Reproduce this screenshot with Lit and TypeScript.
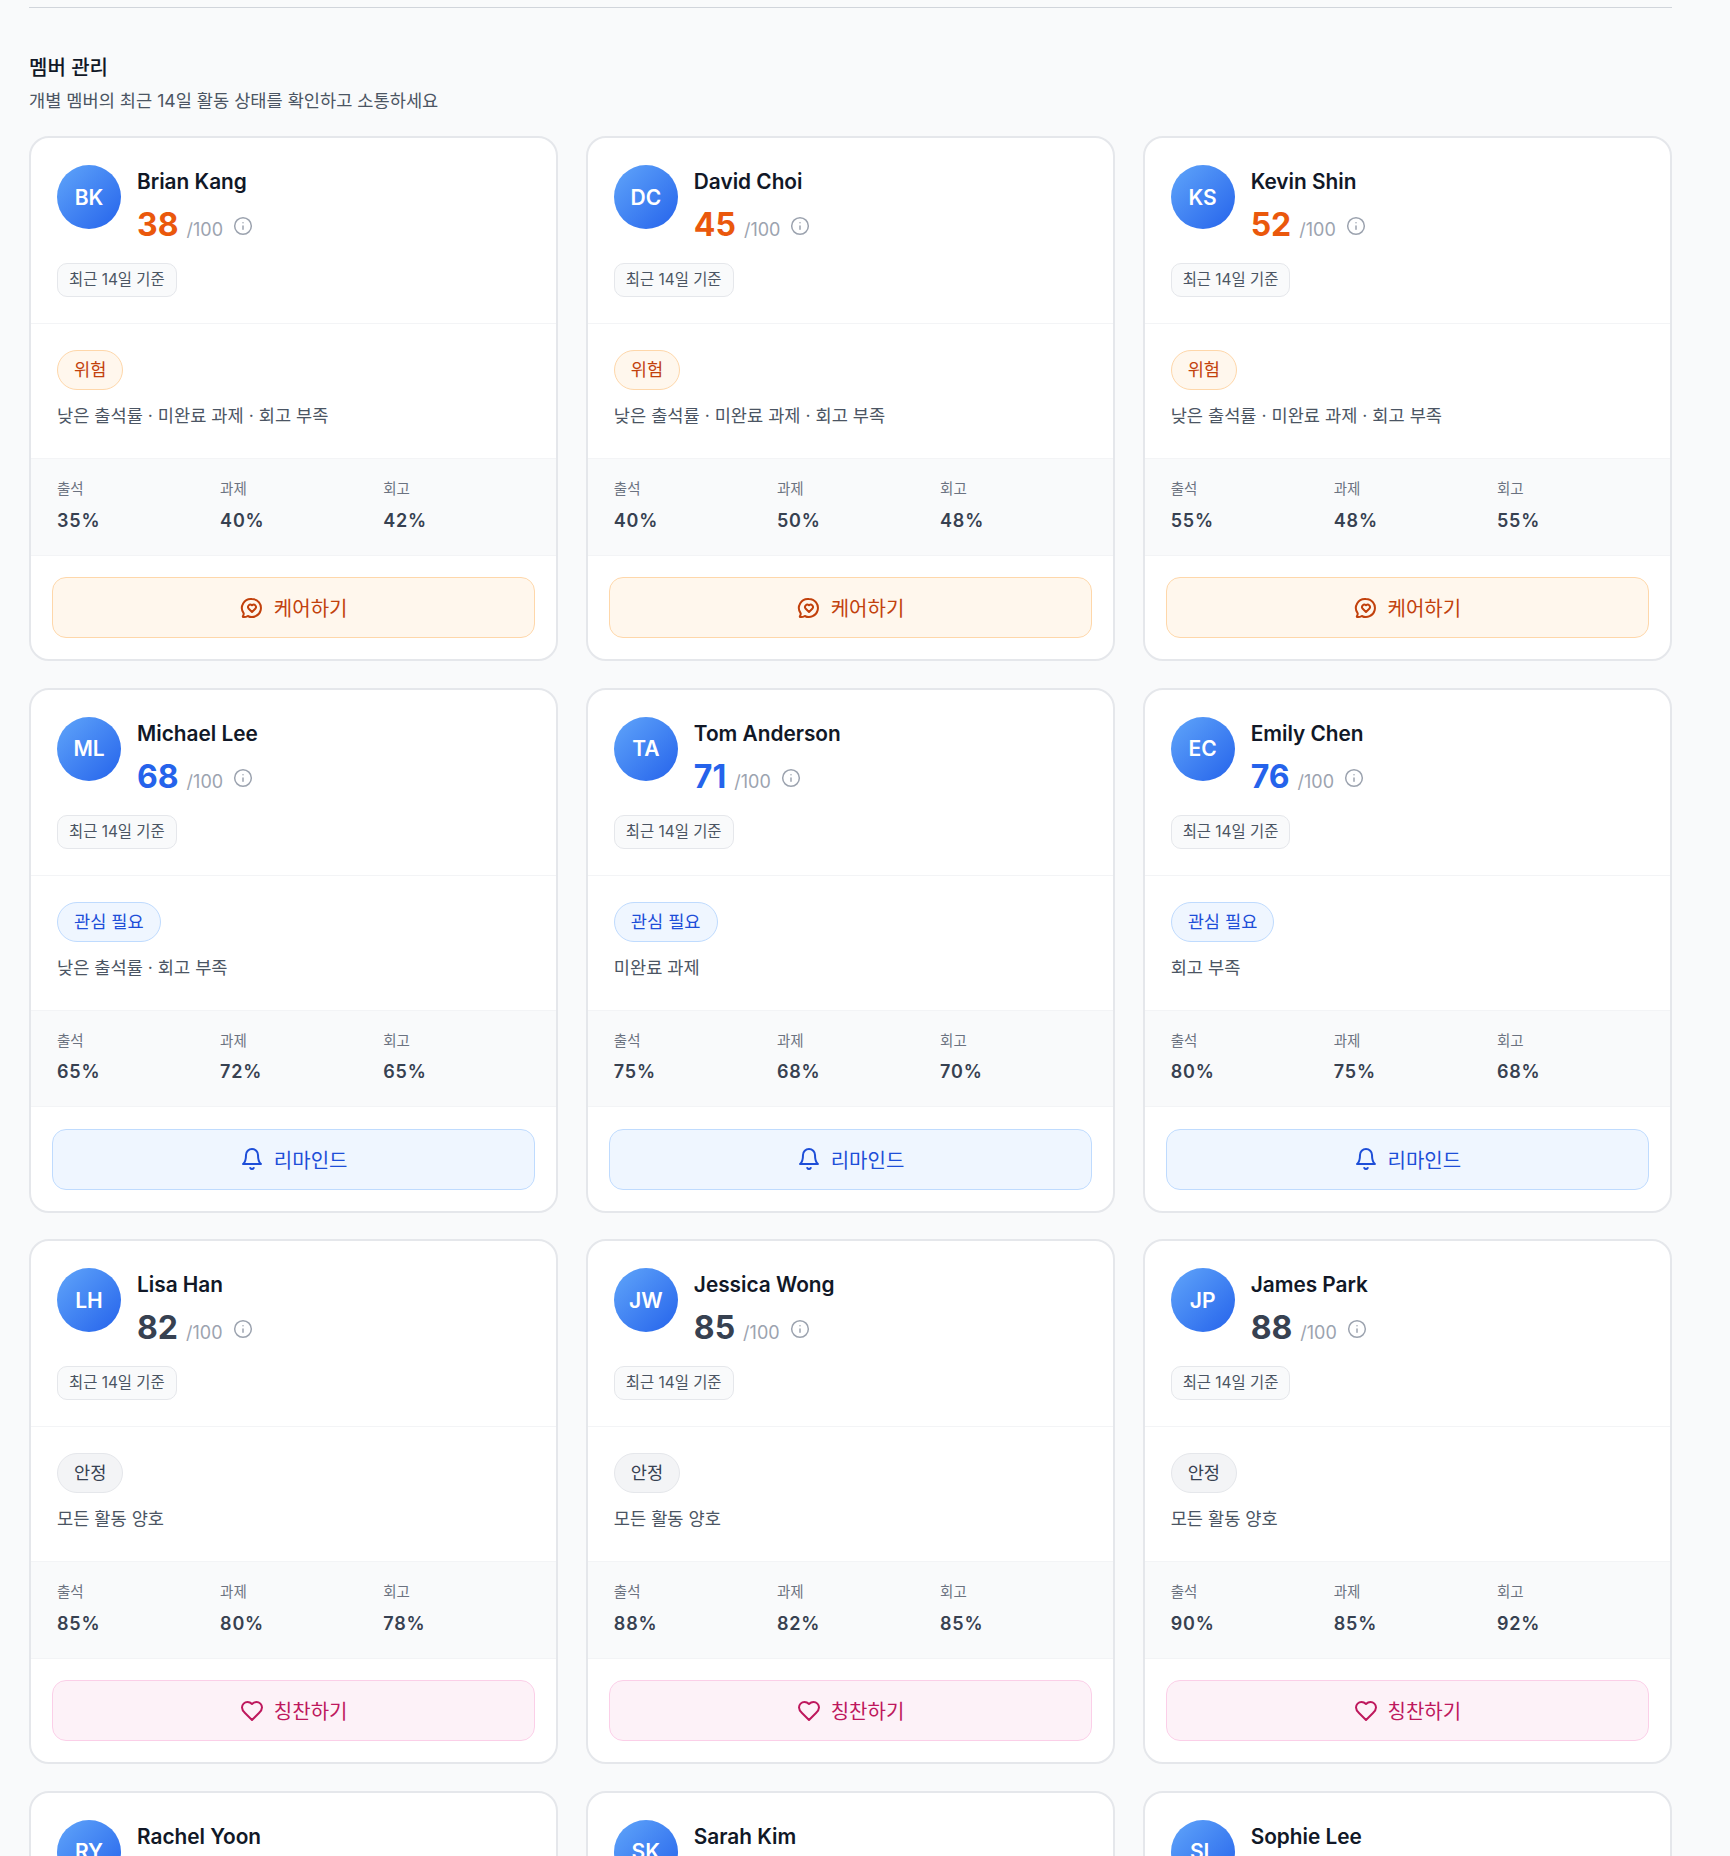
import { LitElement, css, html, svg } from "lit";
import { customElement } from "lit/decorators.js";

type Level = "risk" | "watch" | "good";

interface Member {
  initials: string;
  name: string;
  score: number;
  level: Level;
  note: string;
  attendance: number;
  task: number;
  review: number;
}

const members: Member[] = [
  { initials: "BK", name: "Brian Kang", score: 38, level: "risk", note: "낮은 출석률 · 미완료 과제 · 회고 부족", attendance: 35, task: 40, review: 42 },
  { initials: "DC", name: "David Choi", score: 45, level: "risk", note: "낮은 출석률 · 미완료 과제 · 회고 부족", attendance: 40, task: 50, review: 48 },
  { initials: "KS", name: "Kevin Shin", score: 52, level: "risk", note: "낮은 출석률 · 미완료 과제 · 회고 부족", attendance: 55, task: 48, review: 55 },
  { initials: "ML", name: "Michael Lee", score: 68, level: "watch", note: "낮은 출석률 · 회고 부족", attendance: 65, task: 72, review: 65 },
  { initials: "TA", name: "Tom Anderson", score: 71, level: "watch", note: "미완료 과제", attendance: 75, task: 68, review: 70 },
  { initials: "EC", name: "Emily Chen", score: 76, level: "watch", note: "회고 부족", attendance: 80, task: 75, review: 68 },
  { initials: "LH", name: "Lisa Han", score: 82, level: "good", note: "모든 활동 양호", attendance: 85, task: 80, review: 78 },
  { initials: "JW", name: "Jessica Wong", score: 85, level: "good", note: "모든 활동 양호", attendance: 88, task: 82, review: 85 },
  { initials: "JP", name: "James Park", score: 88, level: "good", note: "모든 활동 양호", attendance: 90, task: 85, review: 92 },
  { initials: "RY", name: "Rachel Yoon", score: 90, level: "good", note: "모든 활동 양호", attendance: 92, task: 88, review: 90 },
  { initials: "SK", name: "Sarah Kim", score: 92, level: "good", note: "모든 활동 양호", attendance: 95, task: 90, review: 91 },
  { initials: "SL", name: "Sophie Lee", score: 95, level: "good", note: "모든 활동 양호", attendance: 98, task: 92, review: 95 },
];

const levelText: Record<Level, string> = { risk: "위험", watch: "관심 필요", good: "안정" };
const actionText: Record<Level, string> = { risk: "케어하기", watch: "리마인드", good: "칭찬하기" };

const actionIcons: Record<Level, unknown> = {
  risk: svg`<path d="M12 3a9 9 0 1 1-4.2 17c-1.5.9-3.1 1.3-4.6 1-.4-.1-.5-.5-.3-.8.6-.8.9-1.8.8-2.9A9 9 0 0 1 12 3Z"/><path d="M12 16l-3.5-3.5a2.4 2.4 0 0 1 3.3-3.4l.2.2.2-.2a2.4 2.4 0 0 1 3.3 3.4Z"/>`,
  watch: svg`<path d="M6 8a6 6 0 0 1 12 0c0 7 3 9 3 9H3s3-2 3-9"/><path d="M10.3 21a1.94 1.94 0 0 0 3.4 0"/>`,
  good: svg`<path d="M19 14c1.49-1.46 3-3.21 3-5.5A5.5 5.5 0 0 0 16.5 3c-1.76 0-3 .5-4.5 2-1.5-1.5-2.74-2-4.5-2A5.5 5.5 0 0 0 2 8.5c0 2.3 1.5 4.05 3 5.5l7 7Z"/>`,
};

@customElement("app-root")
export class AppRoot extends LitElement {
  static styles = css`
    :host {
      background: #f9fafb;
      color: #111827;
      display: block;
      font-family: Inter, "Noto Sans CJK KR", sans-serif;
      height: 1856px;
      overflow: hidden;
      padding: 7px 58px 0 29px;
      box-sizing: border-box;
    }

    .divider {
      border-top: 1px solid #d1d5db;
      margin-bottom: 46px;
    }

    h2 {
      font-size: 20px;
      font-weight: 500;
      line-height: 28px;
      margin: 0;
    }

    .subtitle {
      color: #4b5563;
      font-size: 17.6px;
      line-height: 24px;
      margin: 7px 0 23px;
    }

    .grid {
      display: grid;
      gap: 26.5px 27.5px;
      grid-template-columns: repeat(3, minmax(0, 1fr));
    }

    .card {
      background: #fff;
      border: 2px solid #e5e7eb;
      border-radius: 20px;
      overflow: hidden;
    }

    .head {
      border-bottom: 1px solid #f3f4f6;
      padding: 27px 26px 26px;
    }

    .who {
      align-items: flex-start;
      display: flex;
      gap: 16px;
    }

    .avatar {
      align-items: center;
      background: linear-gradient(135deg, #60a5fa, #2563eb);
      border-radius: 50%;
      color: #fff;
      display: flex;
      flex: none;
      font-size: 21px;
      font-weight: 600;
      height: 64px;
      justify-content: center;
      width: 64px;
    }

    .name {
      font-size: 20.8px;
      font-weight: 600;
      line-height: 28px;
      margin-top: 3px;
    }

    .score-row {
      align-items: baseline;
      display: flex;
      margin-top: 9px;
    }

    .score {
      font-size: 32px;
      font-weight: 700;
      line-height: 40px;
    }

    .score.risk { color: #ea580c; }
    .score.watch { color: #2563eb; }
    .score.good { color: #374151; }

    .max {
      color: #9ca3af;
      font-size: 18px;
      margin-left: 8px;
    }

    .info {
      align-self: center;
      color: #9ca3af;
      height: 20px;
      margin: 2px 0 0 10px;
      width: 20px;
    }

    .window {
      background: #f9fafb;
      border: 1px solid #e5e7eb;
      border-radius: 10px;
      color: #4b5563;
      display: inline-block;
      font-size: 15.4px;
      line-height: 20px;
      margin-top: 18px;
      padding: 6px 11px;
    }

    .status {
      padding: 26px 26px 30px;
    }

    .pill {
      border: 1px solid;
      border-radius: 999px;
      display: inline-block;
      font-size: 17.6px;
      font-weight: 400;
      line-height: 24px;
      padding: 7px 16px;
    }

    .pill.risk { background: #fff7ed; border-color: #fed7aa; color: #c2410c; }
    .pill.watch { background: #eff6ff; border-color: #bfdbfe; color: #1d4ed8; }
    .pill.good { background: #f3f4f6; border-color: #e5e7eb; color: #374151; }

    .note {
      color: #4b5563;
      font-size: 17.6px;
      line-height: 24px;
      margin-top: 14px;
    }

    .metrics {
      background: #f9fafb;
      border-bottom: 1px solid #f3f4f6;
      border-top: 1px solid #f3f4f6;
      display: grid;
      gap: 16px;
      grid-template-columns: repeat(3, 1fr);
      padding: 20px 26px;
    }

    .metric-label {
      color: #6b7280;
      font-size: 14.5px;
      line-height: 20px;
    }

    .metric-value {
      color: #374151;
      font-size: 18px;
      font-weight: 600;
      letter-spacing: 0.8px;
      line-height: 28px;
      margin-top: 7.5px;
    }

    .foot {
      padding: 21.5px 21px 21px;
    }

    button {
      align-items: center;
      border: 1px solid;
      border-radius: 14px;
      display: flex;
      font: inherit;
      font-size: 20px;
      font-weight: 400;
      gap: 10px;
      height: 61px;
      justify-content: center;
      padding: 0;
      width: 100%;
    }

    button svg {
      height: 24px;
      width: 24px;
    }

    button.risk { background: #fff7ed; border-color: #fed7aa; color: #c2410c; }
    button.watch { background: #eff6ff; border-color: #bfdbfe; color: #1d4ed8; }
    button.good { background: #fdf2f8; border-color: #fbcfe8; color: #be185d; }
  `;

  private renderMetric(label: string, value: number) {
    return html`
      <div>
        <div class="metric-label">${label}</div>
        <div class="metric-value">${value}%</div>
      </div>
    `;
  }

  private renderCard(m: Member) {
    return html`
      <article class="card">
        <div class="head">
          <div class="who">
            <div class="avatar">${m.initials}</div>
            <div>
              <div class="name">${m.name}</div>
              <div class="score-row">
                <span class="score ${m.level}">${m.score}</span>
                <span class="max">/100</span>
                <svg class="info" viewBox="0 0 24 24" fill="none" stroke="currentColor" stroke-width="1.8" stroke-linecap="round" stroke-linejoin="round">
                  <circle cx="12" cy="12" r="10"></circle>
                  <path d="M12 16v-4"></path>
                  <path d="M12 8h.01"></path>
                </svg>
              </div>
            </div>
          </div>
          <span class="window">최근 14일 기준</span>
        </div>
        <div class="status">
          <span class="pill ${m.level}">${levelText[m.level]}</span>
          <div class="note">${m.note}</div>
        </div>
        <div class="metrics">
          ${this.renderMetric("출석", m.attendance)}
          ${this.renderMetric("과제", m.task)}
          ${this.renderMetric("회고", m.review)}
        </div>
        <div class="foot">
          <button class=${m.level}>
            <svg viewBox="0 0 24 24" fill="none" stroke="currentColor" stroke-width="2" stroke-linecap="round" stroke-linejoin="round">${actionIcons[m.level]}</svg>
            ${actionText[m.level]}
          </button>
        </div>
      </article>
    `;
  }

  render() {
    return html`
      <div class="divider"></div>
      <h2>멤버 관리</h2>
      <p class="subtitle">개별 멤버의 최근 14일 활동 상태를 확인하고 소통하세요</p>
      <div class="grid">${members.map((m) => this.renderCard(m))}</div>
    `;
  }
}
